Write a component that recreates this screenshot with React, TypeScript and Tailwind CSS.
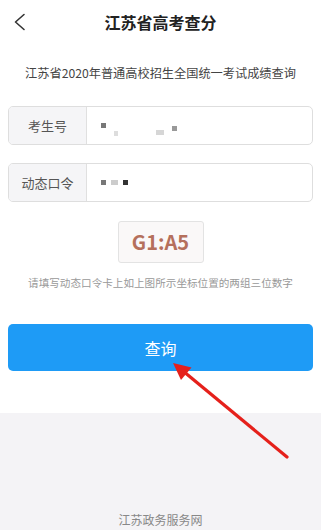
import React from "react";

const Sq = ({ c, w = 5 }: { c: string; w?: number }) => (
  <span className="inline-block h-[5px]" style={{ width: w, background: c }} />
);

export default function App() {
  return (
    <div
      className="relative w-full h-[530px] bg-white flex flex-col overflow-hidden"
      style={{ fontFamily: '"Noto Sans CJK SC", "Noto Sans", sans-serif' }}
    >
      {/* header */}
      <div className="h-[44px] grid grid-cols-[60px_1fr_60px] items-center shrink-0">
        <div className="pl-[13px] flex items-center">
          <svg width="14" height="18" viewBox="0 0 14 18" fill="none">
            <path d="M11 1.5 L2.5 9 L11 16.5" stroke="#333" strokeWidth="1.6" strokeLinecap="round" strokeLinejoin="round" />
          </svg>
        </div>
        <div className="text-center text-[16px] font-bold text-[#222] leading-[20px]">江苏省高考查分</div>
        <div />
      </div>

      {/* subtitle */}
      <div className="mt-[21px] text-center text-[12.2px] leading-[16px] text-[#444]">
        江苏省2020年普通高校招生全国统一考试成绩查询
      </div>

      {/* form */}
      <div className="px-[8px] mt-[25px] flex flex-col gap-[18px]">
        <div className="h-[39px] flex border border-[#dedede] rounded-[5px] overflow-hidden">
          <div className="w-[78px] bg-[#f5f5f7] border-r border-[#e0e0e0] flex items-center justify-center text-[13px] text-[#555]">
            考生号
          </div>
          <div className="flex-1 flex items-center pl-[14px] gap-[8px]">
            <Sq c="#777" />
            <span className="mt-[6px]"><Sq c="#ddd" w={4} /></span>
            <span className="ml-[30px] mt-[4px]"><Sq c="#d6d6d6" w={8} /></span>
            <span className="-mt-[3px]"><Sq c="#999" /></span>
          </div>
        </div>
        <div className="h-[39px] flex border border-[#dedede] rounded-[5px] overflow-hidden">
          <div className="w-[78px] bg-[#f5f5f7] border-r border-[#e0e0e0] flex items-center justify-center text-[13px] text-[#555]">
            动态口令
          </div>
          <div className="flex-1 flex items-center pl-[14px] gap-[5px]">
            <Sq c="#777" />
            <Sq c="#ccc" w={7} />
            <Sq c="#333" />
          </div>
        </div>
      </div>

      {/* captcha */}
      <div className="mt-[19px] flex justify-center">
        <div className="w-[86px] h-[42px] border border-[#e3e3e3] rounded-[3px] bg-[#faf8f8] flex items-center justify-center text-[20px] font-bold text-[#b5705c] leading-none">
          G1:A5
        </div>
      </div>

      {/* hint */}
      <div className="mt-[13px] text-center text-[10.6px] leading-[14px] text-[#999]">
        请填写动态口令卡上如上图所示坐标位置的两组三位数字
      </div>

      {/* button */}
      <div className="px-[8px] mt-[34px]">
        <div className="h-[47px] rounded-[5px] bg-[#1e9bf6] flex items-center justify-center text-white text-[16px]">
          查询
        </div>
      </div>

      {/* gray area */}
      <div className="mt-[42px] flex-1 bg-[#f4f3f6] flex flex-col justify-end items-center pb-[2px]">
        <div className="text-[12px] leading-[16px] text-[#888]">江苏政务服务网</div>
      </div>

      {/* red arrow overlay */}
      <svg className="absolute left-0 top-0 pointer-events-none" width="321" height="530" viewBox="0 0 321 530">
        <line x1="287" y1="457" x2="183" y2="371" stroke="#e5201b" strokeWidth="3.2" strokeLinecap="round" />
        <polygon points="173,363 191.5,367.5 181,380" fill="#e5201b" />
      </svg>
    </div>
  );
}
